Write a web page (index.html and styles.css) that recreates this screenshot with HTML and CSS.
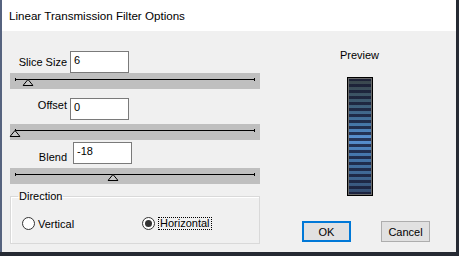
FILE: index.html
```html
<!DOCTYPE html>
<html>
<head>
    <title>Linear Transmission Filter Options</title>
    <link rel="stylesheet" href="styles.css">
</head>
<body>
<div class="dialog">
    <div class="titlebar">Linear Transmission Filter Options</div>
    <div class="client">
        <div class="left">
            <div class="field field-slice">
                <span class="label">Slice Size</span>
                <div class="edit">6</div>
            </div>
            <div class="slider">
                <div class="track">
                    <span class="thumb" style="left: 5.3%"><svg width="11" height="7" viewBox="0 0 11 7"><polygon points="5.5,0.5 10.5,6.5 0.5,6.5"/></svg></span>
                </div>
            </div>

            <div class="field field-offset">
                <span class="label">Offset</span>
                <div class="edit">0</div>
            </div>
            <div class="slider">
                <div class="track">
                    <span class="thumb" style="left: 0%"><svg width="11" height="7" viewBox="0 0 11 7"><polygon points="5.5,0.5 10.5,6.5 0.5,6.5"/></svg></span>
                </div>
            </div>

            <div class="field field-blend">
                <span class="label">Blend</span>
                <div class="edit">-18</div>
            </div>
            <div class="slider">
                <div class="track">
                    <span class="thumb" style="left: 41%"><svg width="11" height="7" viewBox="0 0 11 7"><polygon points="5.5,0.5 10.5,6.5 0.5,6.5"/></svg></span>
                </div>
            </div>

            <fieldset class="group">
                <legend>Direction</legend>
                <div class="radios">
                    <label class="radio radio-first"><span class="circle"></span>Vertical</label>
                    <label class="radio checked"><span class="circle"></span><span class="focus">Horizontal</span></label>
                </div>
            </fieldset>
        </div>

        <div class="right">
            <div class="preview">
                <div class="preview-title">Preview</div>
                <div class="preview-img"></div>
            </div>
            <div class="buttons">
                <button class="btn btn-default">OK</button>
                <button class="btn">Cancel</button>
            </div>
        </div>
    </div>
</div>
</body>
</html>
```

FILE: styles.css
```css
body {
    margin: 0;
    background: #262a33;
    font-family: "Liberation Sans", Arial, sans-serif;
    font-size: 11px;
    color: #000;
}

.dialog {
    box-sizing: border-box;
    width: 456px;
    height: 252px;
    border-left: 2px solid #56637f;
    background: #f0f0f0;
}

.titlebar {
    height: 31px;
    line-height: 31px;
    padding-left: 7px;
    background: #ffffff;
    font-size: 11.6px;
}

.client {
    display: flex;
    height: 221px;
}

.left {
    width: 250px;
    padding: 20px 0 0 8px;
}

.field {
    display: flex;
    align-items: center;
    height: 22px;
}

.label {
    width: 57px;
    margin-right: 3px;
    text-align: right;
    line-height: 13px;
}

.field-offset {
    margin-top: 9px;
}
.field-offset .label {
    margin-bottom: 8px;
}

.field-blend {
    margin-top: 2px;
}
.field-blend .label {
    margin-top: 8px;
}
.field-blend .edit {
    margin-left: 3px;
}

.edit {
    box-sizing: border-box;
    width: 59px;
    height: 22px;
    padding: 2px 3px 0;
    border: 1px solid #7a7a7a;
    background: #fff;
    line-height: 13px;
}

.slider {
    position: relative;
    height: 16px;
    background: #bfbfbf;
    margin-top: 0;
}
.field-offset + .slider,
.field-blend + .slider {
    margin-top: 4px;
}

.track {
    position: absolute;
    left: 5px;
    right: 5px;
    top: 6px;
    height: 1px;
    background: #000;
}
.track::before,
.track::after {
    content: '';
    position: absolute;
    top: -1px;
    width: 1px;
    height: 3px;
    background: #000;
}
.track::before {
    left: 0;
}
.track::after {
    right: 0;
}

.thumb {
    position: absolute;
    top: 0;
    width: 11px;
    height: 7px;
    transform: translateX(-50%);
}
.thumb svg {
    display: block;
}
.thumb polygon {
    fill: #c8c8c8;
    stroke: #000;
    stroke-width: 1;
}

.group {
    margin: 6px 0 0;
    padding: 0 0 13px 7px;
    border: 1px solid #d9d9d9;
    box-shadow: inset 1px 1px 0 #fff;
}
.group legend {
    padding: 0 1px;
    line-height: 13px;
}

.radios {
    display: flex;
    margin: 14px 0 0 4px;
    height: 13px;
    align-items: center;
}

.radio {
    display: flex;
    align-items: center;
}
.radio-first {
    width: 120px;
}

.circle {
    box-sizing: border-box;
    width: 13px;
    height: 13px;
    margin-right: 3px;
    border: 1px solid #333;
    border-radius: 50%;
    background: #fff;
    display: flex;
    align-items: center;
    justify-content: center;
}
.checked .circle::after {
    content: '';
    width: 7px;
    height: 7px;
    border-radius: 50%;
    background: #333;
}

.focus {
    padding: 0 1px;
    border: 1px dotted #000;
    line-height: 11px;
}

.right {
    flex: 1;
    display: flex;
    flex-direction: column;
    padding-top: 18px;
}

.preview {
    width: 51px;
    margin-left: 74px;
    display: flex;
    flex-direction: column;
    align-items: center;
}

.preview-title {
    line-height: 13px;
}

.preview-img {
    box-sizing: border-box;
    width: 26px;
    height: 119px;
    margin-top: 15px;
    border: 1px solid #000;
    box-shadow: inset 0 0 0 1px #6a6a6a;
    background:
        repeating-linear-gradient(to bottom, rgba(20, 22, 48, 0.75) 0 3px, transparent 3px 6px),
        linear-gradient(to bottom, #3a4448 0%, #3d5a70 20%, #4577a8 40%, #5a92d4 52%, #4577ad 65%, #3e6590 85%, #33486a 100%);
}

.buttons {
    display: flex;
    margin: 25px 0 0 42px;
    gap: 30px;
}

.btn {
    box-sizing: border-box;
    width: 49px;
    height: 21px;
    padding: 0;
    border: 1px solid #adadad;
    background: #e1e1e1;
    font-family: "Liberation Sans", Arial, sans-serif;
    font-size: 11px;
    color: #000;
}
.btn-default {
    border: 2px solid #0078d7;
}
```
